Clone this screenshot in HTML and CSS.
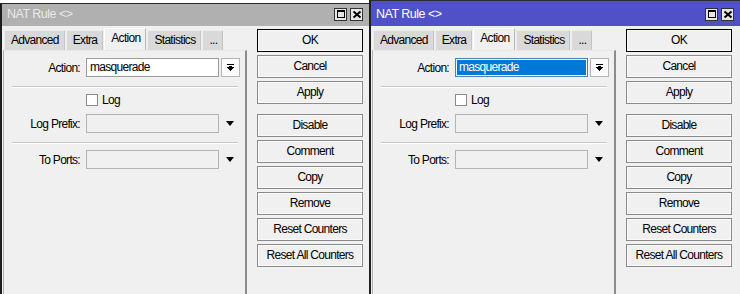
FILE: index.html
```html
<!DOCTYPE html>
<html>
<head>
<meta charset="utf-8">
<link rel="stylesheet" href="styles.css">
</head>
<body>
<div class="desk">
  <div class="window inactive">
    <div class="titlebar">
      <span class="title">NAT Rule &lt;&gt;</span>
      <div class="tbtns">
        <span class="tbtn"><svg width="10" height="9" viewBox="0 0 10 9" shape-rendering="crispEdges"><path d="M1 0h8v2H1z M1 0h1v8H1z M8 0h1v8H8z M1 7h8v1H1z" fill="#000"/></svg></span>
        <span class="tbtn"><svg width="10" height="9" viewBox="0 0 10 9"><path d="M1.5 1.5l7 6M8.5 1.5l-7 6" stroke="#000" stroke-width="2"/></svg></span>
      </div>
    </div>
    <div class="wbody">
      <div class="main">
        <div class="tabs">
          <span class="tab">Advanced</span>
          <span class="tab">Extra</span>
          <span class="tab on">Action</span>
          <span class="tab">Statistics</span>
          <span class="tab">...</span>
        </div>
        <div class="panel">
          <div class="row">
            <span class="lbl">Action:</span>
            <span class="field">masquerade</span>
            <span class="ddbtn"><svg width="7" height="7" viewBox="0 0 7 7" shape-rendering="crispEdges"><path d="M0 0h7v1H0z M2 2h3v1H2z M0 3h7v1H0z M1 4h5v1H1z M2 5h3v1H2z M3 6h1v1H3z" fill="#000"/></svg></span>
          </div>
          <div class="sep"></div>
          <div class="row chkrow">
            <span class="chk"></span><span class="chklbl">Log</span>
          </div>
          <div class="row r2">
            <span class="lbl">Log Prefix:</span>
            <span class="field dis"></span>
            <span class="tri"></span>
          </div>
          <div class="sep"></div>
          <div class="row r3">
            <span class="lbl">To Ports:</span>
            <span class="field dis"></span>
            <span class="tri"></span>
          </div>
        </div>
      </div>
      <div class="buttons">
        <span class="btn def">OK</span>
        <span class="btn">Cancel</span>
        <span class="btn">Apply</span>
        <span class="btn gap">Disable</span>
        <span class="btn">Comment</span>
        <span class="btn">Copy</span>
        <span class="btn">Remove</span>
        <span class="btn">Reset Counters</span>
        <span class="btn">Reset All Counters</span>
      </div>
    </div>
  </div>

  <div class="window active">
    <div class="titlebar">
      <span class="title">NAT Rule &lt;&gt;</span>
      <div class="tbtns">
        <span class="tbtn"><svg width="10" height="9" viewBox="0 0 10 9" shape-rendering="crispEdges"><path d="M1 0h8v2H1z M1 0h1v8H1z M8 0h1v8H8z M1 7h8v1H1z" fill="#000"/></svg></span>
        <span class="tbtn"><svg width="10" height="9" viewBox="0 0 10 9"><path d="M1.5 1.5l7 6M8.5 1.5l-7 6" stroke="#000" stroke-width="2"/></svg></span>
      </div>
    </div>
    <div class="wbody">
      <div class="main">
        <div class="tabs">
          <span class="tab">Advanced</span>
          <span class="tab">Extra</span>
          <span class="tab on">Action</span>
          <span class="tab">Statistics</span>
          <span class="tab">...</span>
        </div>
        <div class="panel">
          <div class="row">
            <span class="lbl">Action:</span>
            <span class="field sel"><span class="seltext">masquerade</span></span>
            <span class="ddbtn"><svg width="7" height="7" viewBox="0 0 7 7" shape-rendering="crispEdges"><path d="M0 0h7v1H0z M2 2h3v1H2z M0 3h7v1H0z M1 4h5v1H1z M2 5h3v1H2z M3 6h1v1H3z" fill="#000"/></svg></span>
          </div>
          <div class="sep"></div>
          <div class="row chkrow">
            <span class="chk"></span><span class="chklbl">Log</span>
          </div>
          <div class="row r2">
            <span class="lbl">Log Prefix:</span>
            <span class="field dis"></span>
            <span class="tri"></span>
          </div>
          <div class="sep"></div>
          <div class="row r3">
            <span class="lbl">To Ports:</span>
            <span class="field dis"></span>
            <span class="tri"></span>
          </div>
        </div>
      </div>
      <div class="buttons">
        <span class="btn def">OK</span>
        <span class="btn">Cancel</span>
        <span class="btn">Apply</span>
        <span class="btn gap">Disable</span>
        <span class="btn">Comment</span>
        <span class="btn">Copy</span>
        <span class="btn">Remove</span>
        <span class="btn">Reset Counters</span>
        <span class="btn">Reset All Counters</span>
      </div>
    </div>
  </div>
</div>
</body>
</html>
```

FILE: styles.css
```css
html, body {
  margin: 0;
  padding: 0;
  height: 294px;
  overflow: hidden;
  background: #ffffff;
}
body {
  font-family: "Liberation Sans", Arial, sans-serif;
  font-size: 12px;
  letter-spacing: -0.7px;
  color: #000;
}
.desk {
  display: flex;
  align-items: flex-start;
  height: 294px;
}
.window {
  box-sizing: border-box;
  background: #f0f0f0;
  border-left: 2px solid #1e1e1e;
  border-top: 1px solid #2a2a2a;
  display: flex;
  flex-direction: column;
}
.window.inactive {
  width: 369px;
  height: 291px;
  margin-top: 3px;
}
.window.active {
  width: 371px;
  height: 294px;
}
.titlebar {
  display: flex;
  align-items: flex-end;
  justify-content: space-between;
  padding: 0 6px 4px 5px;
  box-sizing: border-box;
}
.inactive .titlebar {
  height: 22px;
  background: #b0b0b0;
  color: #e9e9e9;
}
.active .titlebar {
  height: 25px;
  background: #5050c8;
  color: #ffffff;
}
.title {
  font-size: 12.5px;
  line-height: 15px;
  letter-spacing: -0.5px;
}
.tbtns {
  display: flex;
  gap: 3px;
  padding-bottom: 1px;
}
.tbtn {
  width: 11px;
  height: 11px;
  border: 1px solid #333;
  background: #e6e6e6;
  display: flex;
  align-items: center;
  justify-content: center;
}
.wbody {
  flex: 1;
  display: flex;
  padding-left: 1px;
}
.main {
  width: 244px;
  display: flex;
  flex-direction: column;
}
.tabs {
  height: 24px;
  display: flex;
  align-items: flex-end;
  padding-left: 1px;
}
.tab {
  box-sizing: border-box;
  height: 20px;
  line-height: 18px;
  padding: 0 5px 0 6px;
  background: #d9d9d9;
  border: 1px solid #ececec;
  border-bottom: none;
  border-right-color: #c4c4c4;
  margin-right: 1px;
}
.tab.on {
  height: 22px;
  line-height: 19px;
  background: #f0f0f0;
  border-color: #ffffff;
  border-right-color: #b8b8b8;
}
.panel {
  flex: 1;
  border-left: 1px solid #b0b0b0;
  border-top: 1px solid #e8e8e8;
  border-right: 2px solid #8c8c8c;
  padding-top: 7px;
}
.row {
  display: flex;
  align-items: center;
  height: 19px;
}
.lbl {
  width: 76px;
  text-align: right;
  margin-right: 6px;
}
.field {
  box-sizing: border-box;
  width: 133px;
  height: 19px;
  border: 1px solid #9c9c9c;
  background: #ffffff;
  padding: 0 3px;
  line-height: 17px;
}
.field.dis {
  background: #f0f0f0;
  border-color: #b4b4b4;
}
.field.sel {
  padding: 1px;
  border-color: #4f7fb0;
}
.seltext {
  display: block;
  height: 15px;
  line-height: 15px;
  background: #0078d7;
  color: #ffffff;
  padding-left: 2px;
}
.ddbtn {
  box-sizing: border-box;
  width: 19px;
  height: 19px;
  margin-left: 2px;
  border: 1px solid #b4b4b4;
  background: #fbfbfb;
  display: flex;
  align-items: center;
  justify-content: center;
}
.tri {
  width: 0;
  height: 0;
  margin-left: 7px;
  border-left: 4.5px solid transparent;
  border-right: 4.5px solid transparent;
  border-top: 5px solid #000;
}
.sep {
  margin: 9px 0 0 8px;
  width: 226px;
  border-top: 1px solid #c8c8c8;
  border-bottom: 1px solid #ffffff;
}
.chkrow {
  margin-top: 6px;
  height: 12px;
  padding-left: 82px;
}
.chk {
  box-sizing: border-box;
  width: 12px;
  height: 12px;
  border: 1px solid #8a8a8a;
  background: #ffffff;
}
.chklbl {
  margin-left: 4px;
}
.r2 {
  margin-top: 8px;
}
.r3 {
  margin-top: 6px;
}
.buttons {
  margin-left: 10px;
  width: 106px;
  display: flex;
  flex-direction: column;
  padding-top: 3px;
  gap: 3px;
}
.btn {
  box-sizing: border-box;
  height: 23px;
  line-height: 21px;
  text-align: center;
  border: 1px solid #8a8a8a;
  background: #f0f0f0;
  box-shadow: inset 0 0 0 1px #fafafa;
  white-space: nowrap;
}
.btn.def {
  border-color: #000;
  box-shadow: inset 0 0 0 1px #fafafa;
}
.btn.gap {
  margin-top: 7px;
}
```
